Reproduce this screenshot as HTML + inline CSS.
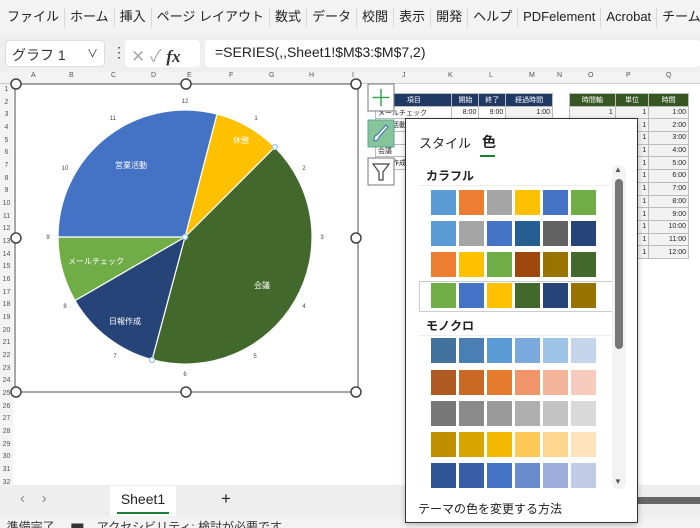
<!DOCTYPE html>
<html><head><meta charset="utf-8"><style>
*{margin:0;padding:0;box-sizing:border-box}
body{width:700px;height:528px;overflow:hidden;position:relative;background:#fff;font-family:"Liberation Sans","Noto Sans CJK JP",sans-serif;color:#222}
.abs{position:absolute}
.tabs{left:0;top:0;width:700px;height:34px;background:#f3f3f3;font-size:13px;display:flex;align-items:center;white-space:nowrap;overflow:hidden;padding-left:2px}
.tabs span{padding:0 5px;border-right:1px solid #d8d8d8;line-height:20px}
.fbar{left:0;top:34px;width:700px;height:38px;background:#efefef}
.sw{position:absolute;width:25px;height:25px}
.colh{top:72px;height:12px;font-size:7px;color:#555;background:#f3f3f3;width:700px;left:0;border-bottom:1px solid #ccc}
.rowh{left:0;width:13px;font-size:7px;color:#555;text-align:center;background:#f3f3f3}
td{border:1px solid #bbb;font-size:7px;height:12.7px;padding:0 2px;text-align:right}
table{border-collapse:collapse;position:absolute}
</style></head><body>
<div class="abs tabs"><span>ファイル</span><span>ホーム</span><span>挿入</span><span>ページ レイアウト</span><span>数式</span><span>データ</span><span>校閲</span><span>表示</span><span>開発</span><span>ヘルプ</span><span>PDFelement</span><span>Acrobat</span><span>チーム</span><span style="color:#1a7f37;border:none">グ</span></div>
<div class="abs fbar"></div>
<div class="abs" style="left:5px;top:40px;width:100px;height:27px;background:#fff;border:1px solid #ddd;border-radius:4px;font-size:14px;padding:4px 6px;color:#333">グラフ 1<span style="position:absolute;right:6px;top:4px;font-size:11px">∨</span></div>
<div class="abs" style="left:112px;top:44px;font-size:14px;color:#333">⋮</div>
<div class="abs" style="left:125px;top:40px;width:75px;height:27px;background:#fff;border-radius:4px;font-size:17px;color:#aaa;padding:2px 6px">✕ ✓ <i style="font-family:'Liberation Serif',serif;color:#333;font-weight:bold">fx</i></div>
<div class="abs" style="left:205px;top:40px;width:495px;height:27px;background:#fff;border-radius:4px;font-size:14px;padding:4px 10px;color:#222">=SERIES(,,Sheet1!$M$3:$M$7,2)</div>
<div class="abs colh"></div>
<div class="abs" style="top:72px;left:0;width:700px;font-size:7px;color:#555">
<span class="abs" style="left:31px">A</span><span class="abs" style="left:69px">B</span><span class="abs" style="left:111px">C</span><span class="abs" style="left:151px">D</span><span class="abs" style="left:187px">E</span><span class="abs" style="left:229px">F</span><span class="abs" style="left:269px">G</span><span class="abs" style="left:309px">H</span><span class="abs" style="left:352px">I</span><span class="abs" style="left:402px">J</span><span class="abs" style="left:448px">K</span><span class="abs" style="left:489px">L</span><span class="abs" style="left:529px">M</span><span class="abs" style="left:557px">N</span><span class="abs" style="left:588px">O</span><span class="abs" style="left:626px">P</span><span class="abs" style="left:666px">Q</span></div>
<div class="abs rowh" style="top:84px;height:401px;line-height:12.67px">1<br>2<br>3<br>4<br>5<br>6<br>7<br>8<br>9<br>10<br>11<br>12<br>13<br>14<br>15<br>16<br>17<br>18<br>19<br>20<br>21<br>22<br>23<br>24<br>25<br>26<br>27<br>28<br>29<br>30<br>31<br>32</div>

<table style="left:375px;top:93px;width:178px">
<tr style="background:#203864;color:#fff"><td style="text-align:center">項目</td><td style="text-align:center">開始</td><td style="text-align:center">終了</td><td style="text-align:center">経過時間</td></tr>
<tr><td style="text-align:left">メールチェック</td><td>8:00</td><td>9:00</td><td style="background:#f2f2f2">1:00</td></tr>
<tr><td style="text-align:left">営業活動</td><td></td><td></td><td></td></tr>
<tr><td style="text-align:left">休憩</td><td></td><td></td><td></td></tr>
<tr><td style="text-align:left">会議</td><td></td><td></td><td></td></tr>
<tr><td style="text-align:left">日報作成</td><td></td><td></td><td></td></tr>
</table>
<table style="left:569px;top:93px;width:120px">
<tr style="background:#375623;color:#fff"><td style="text-align:center">時間軸</td><td style="text-align:center">単位</td><td style="text-align:center">時間</td></tr>
<tr style="background:#f2f2f2"><td>1</td><td>1</td><td>1:00</td></tr>
<tr style="background:#f2f2f2"><td></td><td>1</td><td>2:00</td></tr>
<tr style="background:#f2f2f2"><td></td><td>1</td><td>3:00</td></tr>
<tr style="background:#f2f2f2"><td></td><td>1</td><td>4:00</td></tr>
<tr style="background:#f2f2f2"><td></td><td>1</td><td>5:00</td></tr>
<tr style="background:#f2f2f2"><td></td><td>1</td><td>6:00</td></tr>
<tr style="background:#f2f2f2"><td></td><td>1</td><td>7:00</td></tr>
<tr style="background:#f2f2f2"><td></td><td>1</td><td>8:00</td></tr>
<tr style="background:#f2f2f2"><td></td><td>1</td><td>9:00</td></tr>
<tr style="background:#f2f2f2"><td></td><td>1</td><td>10:00</td></tr>
<tr style="background:#f2f2f2"><td></td><td>1</td><td>11:00</td></tr>
<tr style="background:#f2f2f2"><td></td><td>1</td><td>12:00</td></tr>
</table>

<svg class="abs" style="left:0;top:0" width="700" height="528">
<rect x="15" y="84" width="343" height="308" fill="#fff" stroke="#888" stroke-width="1.5"/>
<g stroke="#fff" stroke-width="1.2">
<path d="M185 237 L217.0 114.1 A127 127 0 0 1 274.8 147.2 Z" fill="#ffc000"/>
<path d="M185 237 L274.8 147.2 A127 127 0 0 1 152.1 359.7 Z" fill="#43682b"/>
<path d="M185 237 L152.1 359.7 A127 127 0 0 1 75.0 300.5 Z" fill="#264478"/>
<path d="M185 237 L75.0 300.5 A127 127 0 0 1 58 237 Z" fill="#70ad47"/>
<path d="M185 237 L58 237 A127 127 0 0 1 217.0 114.1 Z" fill="#4472c4"/>
</g>
<g fill="#fff" font-size="8" font-family="Liberation Sans,Noto Sans CJK JP,sans-serif">
<text x="233" y="143">休憩</text><text x="115" y="168">営業活動</text><text x="254" y="288">会議</text><text x="68" y="264">メールチェック</text><text x="109" y="324">日報作成</text></g>
<g fill="#444" font-size="6" font-family="Liberation Sans,sans-serif" text-anchor="middle">
<text x="185" y="103">12</text><text x="256" y="120">1</text><text x="304" y="170">2</text><text x="322" y="239">3</text><text x="304" y="308">4</text><text x="255" y="358">5</text><text x="185" y="376">6</text><text x="115" y="358">7</text><text x="65" y="308">8</text><text x="48" y="239">9</text><text x="65" y="170">10</text><text x="113" y="120">11</text></g>
<g fill="#fff" stroke="#9cc8ee" stroke-width="1.3"><circle cx="185" cy="237" r="2.5"/><circle cx="275" cy="147" r="2.5"/><circle cx="152" cy="360" r="2.5"/></g>
<g fill="#fff" stroke="#444" stroke-width="1.5">
<circle cx="16" cy="84" r="5"/><circle cx="186" cy="84" r="5"/><circle cx="356" cy="84" r="5"/><circle cx="16" cy="238" r="5"/><circle cx="356" cy="238" r="5"/><circle cx="16" cy="392" r="5"/><circle cx="186" cy="392" r="5"/><circle cx="356" cy="392" r="5"/></g>
<rect x="368" y="84" width="26" height="27" fill="#fff" stroke="#777"/>
<path d="M381 89v17M372.5 97.5h17" stroke="#3aa655" stroke-width="1.5"/>
<rect x="368" y="120" width="26" height="27" fill="#86c59a" stroke="#5a9"/>
<path d="M374 141c3 0 5-2 5-4l9-10-2-2-9 10c-2 0-3 2-3 6z" fill="#fff" stroke="#2f6fb8" stroke-width="1"/>
<rect x="368" y="158" width="26" height="27" fill="#fff" stroke="#777"/>
<path d="M373 164h16l-6 8v8h-4v-8z" fill="none" stroke="#444" stroke-width="1.2"/>
</svg>

<div class="abs" style="left:0;top:485px;width:700px;height:32px;background:#eeeeee"></div>
<div class="abs" style="left:20px;top:490px;font-size:15px;color:#888">‹&nbsp;&nbsp;&nbsp;&nbsp;›</div>
<div class="abs" style="left:110px;top:486px;width:66px;height:30px;background:#fff;font-size:14px;text-align:center;padding-top:5px">Sheet1<div style="position:absolute;left:7px;right:7px;bottom:2px;height:2px;background:#1a7f37"></div></div>
<div class="abs" style="left:221px;top:489px;font-size:17px">+</div>
<div class="abs" style="left:637px;top:497px;width:63px;height:7px;background:#666"></div>
<div class="abs" style="left:0;top:517px;width:700px;height:11px;background:#f3f3f3;font-size:12px;line-height:20px;color:#333;overflow:hidden;white-space:nowrap">&nbsp;&nbsp;準備完了&nbsp;&nbsp;&nbsp;&nbsp;&nbsp;▆&nbsp;&nbsp;&nbsp;&nbsp;アクセシビリティ: 検討が必要です</div>

<div class="abs" style="left:405px;top:118px;width:233px;height:405px;background:#fff;border:1px solid #333;box-shadow:0 2px 6px rgba(0,0,0,.25)">
<div class="abs" style="left:13px;top:14px;font-size:13px">スタイル</div>
<div class="abs" style="left:76px;top:13px;font-size:14px;font-weight:bold">色</div>
<div class="abs" style="left:74px;top:36px;width:15px;height:2px;background:#1a7f37"></div>
<div class="abs" style="left:20px;top:48px;font-size:12px;font-weight:bold">カラフル</div>
<div class="abs" style="left:13px;top:66px;width:195px;height:1px;background:#eee"></div>
<div class="abs" style="left:13px;top:162px;width:196px;height:31px;border:1px solid #ccc"></div>
<div class="abs" style="left:20px;top:198px;font-size:12px;font-weight:bold">モノクロ</div>
<div class="abs" style="left:13px;top:216px;width:195px;height:1px;background:#eee"></div>
<div class="abs" style="left:206px;top:46px;width:14px;height:324px;background:#f3f3f3;border-radius:7px"></div>
<div class="abs" style="left:209px;top:60px;width:8px;height:170px;background:#777;border-radius:4px"></div>
<div class="abs" style="left:208px;top:46px;font-size:8px;color:#555">▲</div>
<div class="abs" style="left:208px;top:358px;font-size:8px;color:#555">▼</div>
<div class="abs" style="left:12px;top:381px;font-size:12px">テーマの色を変更する方法</div>
</div>
<div id="sw"></div>
<script>
var rows=[[190,"#5b9bd5 #ed7d31 #a5a5a5 #ffc000 #4472c4 #70ad47"],[221,"#5b9bd5 #a5a5a5 #4472c4 #255e91 #636363 #264478"],[252,"#ed7d31 #ffc000 #70ad47 #9e480e #997300 #43682b"],[283,"#70ad47 #4472c4 #ffc000 #43682b #264478 #997300"],[338,"#41719c #4a7fb5 #5b9bd5 #7caade #9dc3e6 #c5d6ec"],[370,"#ae5a21 #c96925 #e57b2f #f0956a #f4b49a #f6cbbd"],[401,"#777777 #8a8a8a #9a9a9a #afafaf #c3c3c3 #d9d9d9"],[432,"#bf8f00 #dba500 #f5b800 #ffc957 #ffd690 #ffe4bb"],[463,"#2f5597 #3a5fa8 #4472c4 #6b8ccc #9badd8 #c0cbe5"]];
var h="";rows.forEach(function(r){r[1].split(" ").forEach(function(c,i){h+='<div class="sw" style="left:'+(431+i*28)+'px;top:'+r[0]+'px;background:'+c+'"></div>';});});
document.getElementById("sw").innerHTML=h;
</script>
</body></html>
